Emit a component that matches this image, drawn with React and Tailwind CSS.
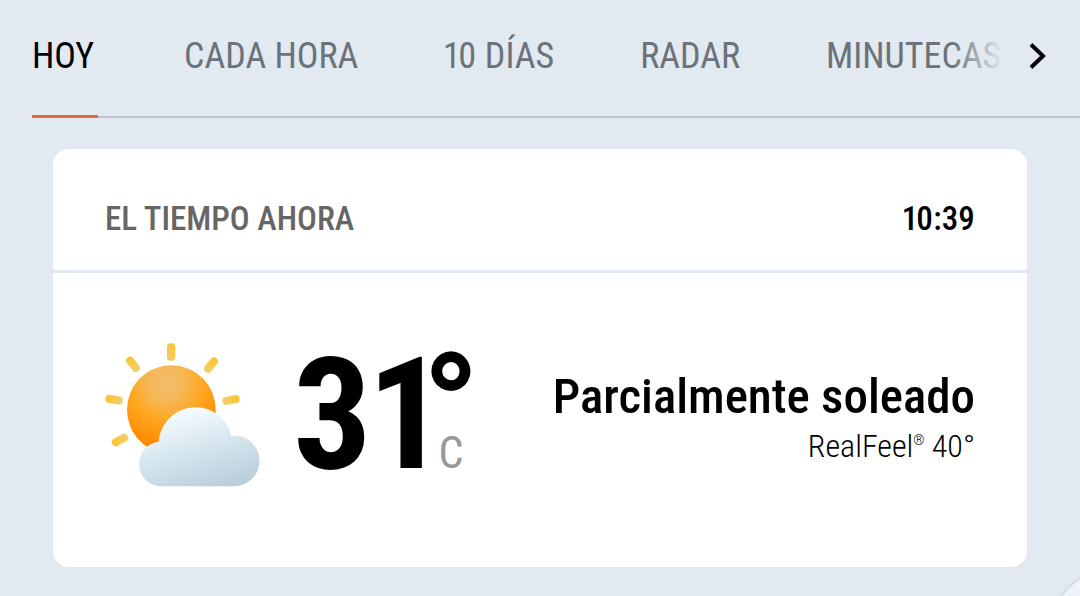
const tabs = [
  { id: 'today', label: 'HOY' },
  { id: 'hourly', label: 'CADA HORA' },
  { id: 'daily', label: '10 DÍAS' },
  { id: 'radar', label: 'RADAR' },
  { id: 'minutecast', label: 'MINUTECAST' },
];

const current = {
  time: '10:39',
  temp: '31',
  unit: 'C',
  phrase: 'Parcialmente soleado',
  realFeel: '40°',
};

function PartlySunnyIcon({ className }) {
  return (
    <svg viewBox="30 22 468 438" className={className} role="img" aria-label="Parcialmente soleado">
      <defs>
        <radialGradient id="sunFill" gradientUnits="userSpaceOnUse" cx="215" cy="145" r="190">
          <stop offset="0%" stopColor="#f3bd6c" />
          <stop offset="25%" stopColor="#f5b95b" />
          <stop offset="58%" stopColor="#ffa722" />
          <stop offset="100%" stopColor="#ff8a00" />
        </radialGradient>
        <linearGradient id="rayFill" x1="0" y1="0" x2="0" y2="1">
          <stop offset="0%" stopColor="#fbc52e" />
          <stop offset="100%" stopColor="#f3cd6c" />
        </linearGradient>
        <linearGradient id="cloudFill" gradientUnits="userSpaceOnUse" x1="270" y1="215" x2="345" y2="470">
          <stop offset="0%" stopColor="#f6fdff" />
          <stop offset="40%" stopColor="#dcebf2" />
          <stop offset="100%" stopColor="#b9cddb" />
        </linearGradient>
      </defs>

      {/* Rays */}
      <g fill="url(#rayFill)">
        <rect x="216" y="26" width="25" height="52" rx="11" />
        <rect x="-12" y="-26" width="24" height="52" rx="11" transform="translate(114 89) rotate(-38)" />
        <rect x="-12" y="-26" width="24" height="52" rx="11" transform="translate(348 91) rotate(39)" />
        <rect x="-12" y="-26" width="24" height="52" rx="11" transform="translate(57 195) rotate(-80)" />
        <rect x="-12" y="-26" width="24" height="52" rx="11" transform="translate(408 196) rotate(80)" />
        <rect x="-12" y="-26" width="24" height="52" rx="11" transform="translate(75 316) rotate(-118)" />
      </g>

      <circle cx="229" cy="225" r="133" fill="url(#sunFill)" />

      <path
        d="M197 455A67 67 0 0 1 191 321.500C196 263 244 218 301 218C353 218 397 253 409 303A76 76 0 1 1 417 454.500Z"
        fill="url(#cloudFill)"
      />
    </svg>
  );
}

function TabBar() {
  return (
    <nav className="relative ml-8 border-b-2 border-[#bfc3cc]">
      <div className="-mb-0.5 flex gap-[86px] overflow-hidden text-[36px] leading-[44px] text-[#6b727a] proportional-nums">
        {tabs.map((tab, i) => (
          <a
            key={tab.id}
            href={`#${tab.id}`}
            className={
              i === 0
                ? 'relative shrink-0 border-b-3 border-[#dc6a42] pt-[34px] pr-1 pb-[37px] text-black'
                : 'shrink-0 pt-[34px] pb-[37px]'
            }
          >
            {tab.label}
          </a>
        ))}
      </div>

      {/* Fade over the clipped tab, with the scroll arrow */}
      <div className="absolute top-0 right-0 flex h-28 w-32">
        <div className="w-13 bg-linear-to-r from-[#e2e9f1]/0 to-[#e2e9f1]" />
        <button type="button" aria-label="Siguiente" className="flex flex-1 items-center bg-[#e2e9f1] pl-6">
          <svg viewBox="0 0 18 28" className="h-7 w-[18px]" fill="none" stroke="#000" strokeWidth="4">
            <path d="M3 2.500L15 14L3 25.500" />
          </svg>
        </button>
      </div>
    </nav>
  );
}

function CurrentWeatherCard() {
  return (
    <section className="mx-[53px] mt-[31px] rounded-2xl bg-white">
      <header className="flex items-center justify-between border-b-3 border-[#e2e9f1] px-[52px] pt-[50px] pb-[31px] text-[33px] leading-10 font-medium">
        <h1 className="text-[#666]">EL TIEMPO AHORA</h1>
        <time className="proportional-nums">{current.time}</time>
      </header>

      <div className="flex items-center justify-between px-[52px] pt-[62px] pb-[72px]">
        <div className="flex items-center">
          <PartlySunnyIcon className="w-[156px]" />
          <div className="ml-8 flex h-40 font-bold proportional-nums">
            <span className="text-[156px] leading-[160px]">{current.temp}</span>
            <span className="-ml-4 flex flex-col">
              <span className="text-[144px] leading-[144px] font-black">°</span>
              <span className="-mt-12 pl-4 text-[44px] leading-[44px] font-normal text-[#999]">
                {current.unit}
              </span>
            </span>
          </div>
        </div>

        <div className="pt-1 text-right">
          <p className="text-[49px] leading-[58px] font-medium">{current.phrase}</p>
          <p className="text-[32px] leading-10 font-light">
            RealFeel<sup className="-top-3 text-[14px]">®</sup> {current.realFeel}
          </p>
        </div>
      </div>
    </section>
  );
}

export default function App() {
  return (
    <div className="relative min-h-screen overflow-hidden bg-[#e2e9f1] pb-7 font-['Roboto_Condensed',Roboto,sans-serif] text-black">
      <TabBar />
      <CurrentWeatherCard />
      <button
        type="button"
        aria-label="Más"
        className="absolute -right-24 -bottom-[100px] size-32 rounded-full border-3 border-[#d9dfe9] bg-[#eef2f9]"
      />
    </div>
  );
}
